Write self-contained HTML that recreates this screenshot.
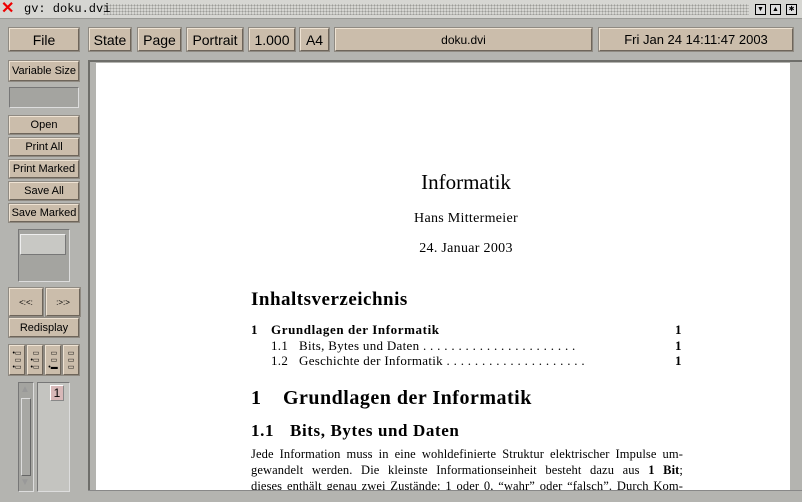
<!DOCTYPE html>
<html><head><meta charset="utf-8"><style>
*{margin:0;padding:0;box-sizing:border-box}
body{width:802px;height:502px;overflow:hidden;background:#b4b4b0;position:relative;font-family:"Liberation Sans",sans-serif}
.a{position:absolute}
.b{position:absolute;background:#cbbdab;border:1px solid;border-color:#efe3d3 #6e655a #6e655a #efe3d3;box-shadow:0 0 0 1px #8f8a82;color:#000;text-align:center;font-size:14px;display:flex;align-items:center;justify-content:center}
.s{font-size:11px}
.serif{font-family:"Liberation Serif",serif;color:#000;position:absolute;white-space:nowrap}
.t{position:absolute;left:0;width:62px}
</style></head><body>
<div class="a" style="left:0;top:0;width:802px;height:19px;background:#d6d6d2;border-bottom:1px solid #9a9a96"></div>
<div class="a" style="left:103px;top:4px;width:646px;height:11px;background-image:radial-gradient(#9c9c98 0.8px,transparent 1px);background-size:3px 3px"></div>
<div class="a" style="left:1px;top:0;font-size:16px;color:#e00;font-weight:bold;line-height:18px">✕</div>
<div class="a" style="left:24px;top:2px;font-family:'Liberation Mono',monospace;font-size:12px">gv: doku.dvi</div>
<div class="a" style="left:755px;top:4px;width:11px;height:11px;border:1px solid #000;background:#ddd;font-size:7px;text-align:center;line-height:9px">▼</div>
<div class="a" style="left:770px;top:4px;width:11px;height:11px;border:1px solid #000;background:#ddd;font-size:7px;text-align:center;line-height:9px">▲</div>
<div class="a" style="left:786px;top:4px;width:11px;height:11px;border:1px solid #000;background:#ddd;font-size:7px;text-align:center;line-height:9px">✱</div>

<div class="b" style="left:9px;top:28px;width:70px;height:23px">File</div>
<div class="b" style="left:89px;top:28px;width:42px;height:23px">State</div>
<div class="b" style="left:138px;top:28px;width:43px;height:23px">Page</div>
<div class="b" style="left:187px;top:28px;width:56px;height:23px">Portrait</div>
<div class="b" style="left:249px;top:28px;width:46px;height:23px">1.000</div>
<div class="b" style="left:300px;top:28px;width:29px;height:23px">A4</div>
<div class="b s" style="left:335px;top:28px;width:257px;height:23px;font-size:12px">doku.dvi</div>
<div class="b s" style="left:599px;top:28px;width:194px;height:23px;font-size:13px">Fri Jan 24 14:11:47 2003</div>

<div class="b s" style="left:9px;top:61px;width:70px;height:20px">Variable Size</div>
<div class="a" style="left:9px;top:87px;width:70px;height:21px;background:#a4a4a0;border:1px solid;border-color:#777 #ddd #ddd #777"></div>
<div class="b s" style="left:9px;top:116px;width:70px;height:18px">Open</div>
<div class="b s" style="left:9px;top:138px;width:70px;height:18px">Print All</div>
<div class="b s" style="left:9px;top:160px;width:70px;height:18px">Print Marked</div>
<div class="b s" style="left:9px;top:182px;width:70px;height:18px">Save All</div>
<div class="b s" style="left:9px;top:204px;width:70px;height:18px">Save Marked</div>
<div class="a" style="left:18px;top:229px;width:52px;height:53px;background:#a4a4a0;border:1px solid;border-color:#777 #ddd #ddd #777"></div>
<div class="a" style="left:20px;top:234px;width:46px;height:21px;background:#c8c8c4;border:1px solid;border-color:#eee #777 #777 #eee"></div>
<div class="b" style="left:9px;top:288px;width:34px;height:28px;font-size:8px">&lt;:&lt;:</div>
<div class="b" style="left:46px;top:288px;width:34px;height:28px;font-size:8px">:&gt;:&gt;</div>
<div class="b s" style="left:9px;top:318px;width:70px;height:19px">Redisplay</div>
<div class="b" style="left:9px;top:345px;width:16px;height:30px;font-size:7px;line-height:7px">•▭<br>&nbsp;▭<br>•▭</div>
<div class="b" style="left:27px;top:345px;width:16px;height:30px;font-size:7px;line-height:7px">&nbsp;▭<br>•▭<br>•▭</div>
<div class="b" style="left:45px;top:345px;width:16px;height:30px;font-size:7px;line-height:7px">&nbsp;▭<br>&nbsp;▭<br>•▬</div>
<div class="b" style="left:63px;top:345px;width:16px;height:30px;font-size:7px;line-height:7px">▭<br>▭<br>▭</div>
<div class="a" style="left:18px;top:382px;width:16px;height:110px;background:#a4a4a0;border:1px solid;border-color:#777 #ddd #ddd #777"></div>
<div class="a" style="left:21px;top:398px;width:10px;height:78px;background:#a8a8a4;border:1px solid;border-color:#ddd #666 #666 #ddd"></div>
<div class="a" style="left:20px;top:384px;font-size:10px;color:#999">▲</div>
<div class="a" style="left:20px;top:477px;font-size:10px;color:#999">▼</div>
<div class="a" style="left:37px;top:382px;width:33px;height:110px;background:#c4c4c0;border:1px solid;border-color:#777 #ddd #ddd #777"></div>
<div class="a" style="left:50px;top:385px;width:14px;height:16px;background:#d8b8b8;border:1px solid;border-color:#fff #888 #888 #fff;font-size:12px;line-height:14px;text-align:center">1</div>

<div class="a" style="left:88px;top:60px;width:714px;height:442px;background:#b4b4b0;border-left:2px solid #6e6e6a;border-top:2px solid #6e6e6a"></div>
<div class="a" style="left:96px;top:63px;width:694px;height:427px;background:#fff"></div>

<div class="serif" style="left:0;width:932px;text-align:center;top:170px;font-size:21px">Informatik</div>
<div class="serif" style="left:0;width:932px;text-align:center;top:211px;font-size:14px;letter-spacing:0.3px">Hans Mittermeier</div>
<div class="serif" style="left:0;width:932px;text-align:center;top:241px;font-size:14px;letter-spacing:0.3px">24. Januar 2003</div>
<div class="serif" style="left:251px;top:289px;font-size:19px;font-weight:bold;letter-spacing:0.5px">Inhaltsverzeichnis</div>
<div class="serif" style="left:251px;top:322px;font-size:13px;font-weight:bold;letter-spacing:0.6px"><span style="display:inline-block;width:20px">1</span>Grundlagen der Informatik</div>
<div class="serif" style="left:675px;top:322px;font-size:13px;font-weight:bold">1</div>
<div class="serif" style="left:271px;top:338px;font-size:13px;letter-spacing:0.3px"><span style="display:inline-block;width:28px">1.1</span>Bits, Bytes und Daten&nbsp;. . . . . . . . . . . . . . . . . . . . . .</div>
<div class="serif" style="left:675px;top:338px;font-size:13px;font-weight:bold">1</div>
<div class="serif" style="left:271px;top:353px;font-size:13px;letter-spacing:0.3px"><span style="display:inline-block;width:28px">1.2</span>Geschichte der Informatik&nbsp;. . . . . . . . . . . . . . . . . . . .</div>
<div class="serif" style="left:675px;top:353px;font-size:13px;font-weight:bold">1</div>
<div class="serif" style="left:251px;top:387px;font-size:20px;font-weight:bold;letter-spacing:0.5px"><span style="display:inline-block;width:32px">1</span>Grundlagen der Informatik</div>
<div class="serif" style="left:251px;top:421px;font-size:17px;font-weight:bold;letter-spacing:0.6px"><span style="display:inline-block;width:39px">1.1</span>Bits, Bytes und Daten</div>
<div class="serif" style="left:251px;top:446px;width:432px;font-size:12.5px;line-height:16px;white-space:normal;text-align:justify;text-align-last:justify;letter-spacing:0.1px">Jede Information muss in eine wohldefinierte Struktur elektrischer Impulse um-<br>gewandelt werden. Die kleinste Informationseinheit besteht dazu aus <b>1 Bit</b>;<br>dieses enthält genau zwei Zustände: 1 oder 0, “wahr” oder “falsch”. Durch Kom-</div>
<div class="a" style="left:88px;top:490px;width:714px;height:12px;background:#b4b4b0;border-top:1px solid #888"></div>
</body></html>
